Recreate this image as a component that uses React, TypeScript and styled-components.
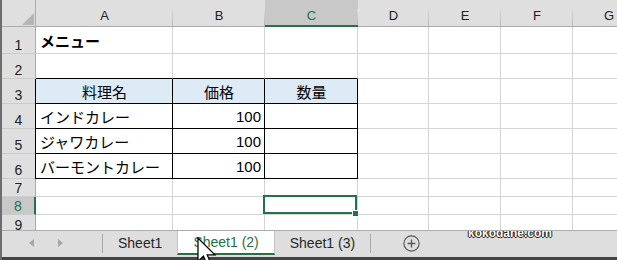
import React from 'react';
import styled, { createGlobalStyle, css } from 'styled-components';

const GlobalStyle = createGlobalStyle`
  body {
    margin: 0;
    background: #fff;
    overflow: hidden;
  }
`;

const GREEN = '#217346';
const GRID = '#d4d4d4';

const colWidths = [34, 137, 92, 93, 71, 72, 72, 72];
const rowHeights = [27, 27, 25, 25, 25, 25, 25, 18, 18, 19];
const letters = ['A', 'B', 'C', 'D', 'E', 'F', 'G'];

type CellData = { text: string; align?: 'left' | 'center' | 'right'; bold?: boolean };

// row -> column index -> content
const data: Record<number, Record<number, CellData>> = {
  1: { 0: { text: 'メニュー', bold: true } },
  3: {
    0: { text: '料理名', align: 'center' },
    1: { text: '価格', align: 'center' },
    2: { text: '数量', align: 'center' },
  },
  4: { 0: { text: 'インドカレー' }, 1: { text: '100', align: 'right' } },
  5: { 0: { text: 'ジャワカレー' }, 1: { text: '100', align: 'right' } },
  6: { 0: { text: 'バーモントカレー' }, 1: { text: '100', align: 'right' } },
};

const App = () => {
  const cells: React.ReactNode[] = [];
  for (let r = 1; r <= 9; r++) {
    cells.push(
      <RowHeader key={`h${r}`} $selected={r === 8}>
        {r}
      </RowHeader>
    );
    for (let c = 0; c < letters.length; c++) {
      const inTable = r >= 3 && r <= 6 && c <= 2;
      const content = data[r]?.[c];
      const selected = r === 8 && c === 2;
      cells.push(
        <Cell
          key={`${r}-${c}`}
          $align={content?.align ?? 'left'}
          $bold={!!content?.bold}
          $fill={r === 3 && c <= 2}
          $boxRight={inTable}
          $boxBottom={r >= 2 && r <= 6 && c <= 2}
          $boxLeft={inTable && c === 0}
        >
          {content?.text}
          {selected && (
            <Selection>
              <FillHandle />
            </Selection>
          )}
        </Cell>
      );
    }
  }

  return (
    <>
      <GlobalStyle />
      <Window>
        <Sheet>
          <Corner>
            <CornerMark />
          </Corner>
          {letters.map((l) => (
            <ColHeader key={l} $selected={l === 'C'}>
              {l}
            </ColHeader>
          ))}
          {cells}
        </Sheet>

        <TabBar>
          <NavArea>
            <NavArrow $dir="left" />
            <NavArrow $dir="right" />
          </NavArea>
          <Divider />
          <Tab>Sheet1</Tab>
          <Tab $active>Sheet1 (2)</Tab>
          <Tab>Sheet1 (3)</Tab>
          <Divider />
          <AddSheet viewBox="0 0 17 17" width="17" height="17">
            <circle cx="8.5" cy="8.5" r="7.6" fill="none" stroke="#595959" strokeWidth="1.2" />
            <path d="M8.5 4.6v7.8M4.6 8.5h7.8" stroke="#595959" strokeWidth="1.4" />
          </AddSheet>
          <Watermark>kokodane.com</Watermark>
        </TabBar>
        <StatusEdge />

        <Pointer viewBox="0 0 14 23" width="19.6" height="32.2">
          <polygon
            points="0.7,0.7 0.7,17.5 4.6,13.6 7.6,20.6 10.2,19.5 7.3,12.8 12.8,12.8"
            fill="#fff"
            stroke="#000"
            strokeWidth="0.9"
            strokeLinejoin="miter"
          />
        </Pointer>
      </Window>
    </>
  );
};

const Window = styled.div`
  position: relative;
  width: 617px;
  height: 260px;
  box-sizing: border-box;
  border-left: 2px solid #6e6e6e;
  overflow: hidden;
  display: flex;
  flex-direction: column;
  background: #fff;
`;

const Sheet = styled.div`
  display: grid;
  grid-template-columns: ${colWidths.map((w) => `${w}px`).join(' ')};
  grid-template-rows: ${rowHeights.map((h) => `${h}px`).join(' ')};
  height: 230px;
  flex: none;
  overflow: hidden;
`;

const headerBase = css`
  box-sizing: border-box;
  background: #dfdfdf;
  font-family: 'Liberation Sans', Arial, sans-serif;
  color: #222;
  display: flex;
  justify-content: center;
  align-items: flex-end;
  line-height: 1;
`;

const Corner = styled.div`
  ${headerBase};
  justify-content: flex-end;
  border-right: 1px solid #ababab;
  border-bottom: 1px solid #ababab;
  padding: 0 1px 1px 0;
`;

const CornerMark = styled.div`
  width: 0;
  height: 0;
  border-left: 12px solid transparent;
  border-bottom: 12px solid #b5b5b5;
`;

const ColHeader = styled.div<{ $selected?: boolean }>`
  ${headerBase};
  position: relative;
  font-size: 13px;
  padding-bottom: 4px;
  border-bottom: 1px solid #ababab;
  ${(p) =>
    p.$selected &&
    css`
      background: #c8c8c8;
      color: ${GREEN};
      border-bottom: 2px solid ${GREEN};
      padding-bottom: 3px;
    `}

  &::after {
    content: '';
    position: absolute;
    right: 0;
    top: 9px;
    bottom: 0;
    width: 1px;
    background: linear-gradient(#dcdcdc, #b4b4b4);
  }
`;

const RowHeader = styled.div<{ $selected?: boolean }>`
  ${headerBase};
  font-size: 14px;
  padding-bottom: 1px;
  border-right: 1px solid #ababab;
  border-bottom: 1px solid #cbcbcb;
  ${(p) =>
    p.$selected &&
    css`
      background: #c8c8c8;
      color: ${GREEN};
      border-right: 2px solid ${GREEN};
    `}
`;

const Cell = styled.div<{
  $align: 'left' | 'center' | 'right';
  $bold: boolean;
  $fill: boolean;
  $boxRight: boolean;
  $boxBottom: boolean;
  $boxLeft: boolean;
}>`
  position: relative;
  box-sizing: border-box;
  display: flex;
  align-items: center;
  justify-content: ${(p) =>
    p.$align === 'center' ? 'center' : p.$align === 'right' ? 'flex-end' : 'flex-start'};
  padding: 0 3px 0 4px;
  white-space: nowrap;
  font-family: 'Liberation Sans', 'Noto Sans CJK JP', sans-serif;
  font-size: 15px;
  font-weight: ${(p) => (p.$bold ? 700 : 400)};
  color: #000;
  background: ${(p) => (p.$fill ? '#ddebf7' : '#fff')};
  border-right: 1px solid ${(p) => (p.$boxRight ? '#000' : GRID)};
  border-bottom: 1px solid ${(p) => (p.$boxBottom ? '#000' : GRID)};
  box-shadow: ${(p) => (p.$boxLeft ? '-1px 0 0 #000' : 'none')};
`;

const Selection = styled.div`
  position: absolute;
  top: -2px;
  left: -2px;
  right: 0;
  bottom: 0;
  border: 2px solid ${GREEN};
  z-index: 1;
`;

const FillHandle = styled.div`
  position: absolute;
  right: -3px;
  bottom: -4px;
  width: 5px;
  height: 5px;
  background: ${GREEN};
  outline: 1px solid #fff;
`;

const TabBar = styled.div`
  position: relative;
  flex: none;
  height: 27px;
  box-sizing: border-box;
  border-top: 1px solid #acacac;
  background: #dedede;
  display: flex;
  align-items: flex-start;
  overflow: hidden;
  font-family: 'Liberation Sans', Arial, sans-serif;
  font-size: 14px;
`;

const NavArea = styled.div`
  width: 100px;
  height: 24px;
  box-sizing: border-box;
  display: flex;
  align-items: center;
  gap: 24px;
  padding-left: 27px;
`;

const NavArrow = styled.div<{ $dir: 'left' | 'right' }>`
  width: 0;
  height: 0;
  border-top: 4px solid transparent;
  border-bottom: 4px solid transparent;
  ${(p) =>
    p.$dir === 'left'
      ? css`
          border-right: 5px solid #a6a6a6;
        `
      : css`
          border-left: 5px solid #a6a6a6;
        `}
`;

const Divider = styled.div`
  width: 1px;
  height: 19px;
  margin-top: 3px;
  background: #a9a9a9;
  flex: none;
`;

const Tab = styled.div<{ $active?: boolean }>`
  height: 24px;
  box-sizing: border-box;
  padding: 0 15px;
  display: flex;
  align-items: center;
  white-space: nowrap;
  color: #262626;
  ${(p) =>
    p.$active &&
    css`
      background: #fff;
      color: ${GREEN};
      border-left: 1px solid #c4c4c4;
      border-right: 1px solid #c4c4c4;
      border-bottom: 2px solid ${GREEN};
    `}
`;

const AddSheet = styled.svg`
  margin: 4px 0 0 32px;
  flex: none;
`;

const Watermark = styled.span`
  position: absolute;
  left: 466px;
  top: -4px;
  font-family: 'Liberation Sans', Arial, sans-serif;
  font-size: 12px;
  font-weight: 700;
  line-height: 12px;
  color: #fff;
  text-shadow: 1px 0 0 #222, -1px 0 0 #222, 0 1px 0 #222, 0 -1px 0 #222;
`;

const StatusEdge = styled.div`
  flex: none;
  height: 3px;
  background: #444;
`;

const Pointer = styled.svg`
  position: absolute;
  left: 195px;
  top: 237px;
  z-index: 2;
`;

export default App;
